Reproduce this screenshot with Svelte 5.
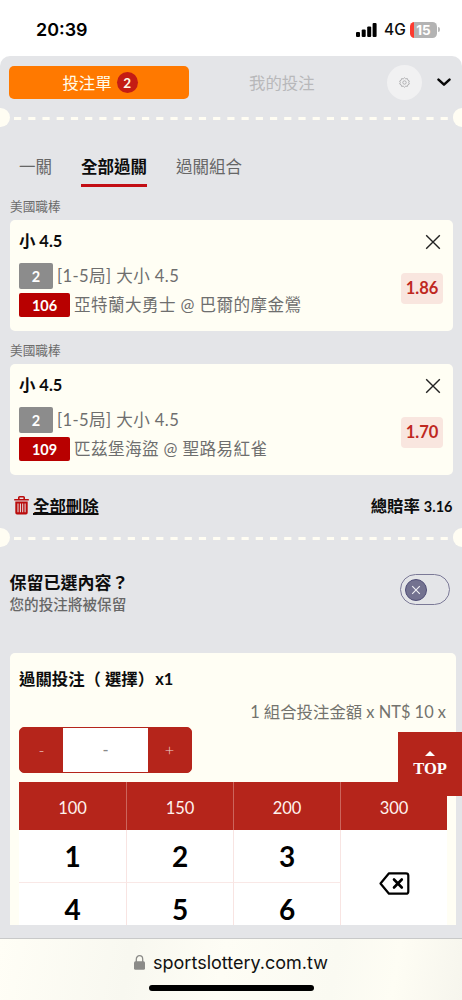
<script>
  const picks = [
    { id: 1, league: '美國職棒', pick: '小 4.5', n: '2', market: '[1-5局] 大小 4.5', code: '106', match: '亞特蘭大勇士 @ 巴爾的摩金鶯', odds: '1.86' },
    { id: 2, league: '美國職棒', pick: '小 4.5', n: '2', market: '[1-5局] 大小 4.5', code: '109', match: '匹茲堡海盜 @ 聖路易紅雀', odds: '1.70' }
  ];
  const amounts = ['100', '150', '200', '300'];
  const digits = ['1', '2', '3', '4', '5', '6'];
</script>

{#snippet divider()}
  <div class="divider">
    <i class="notch"></i>
    <svg class="dashes" height="3" width="434"><line x1="0" x2="434" y1="1.5" y2="1.5" stroke="#fffdf3" stroke-width="3" stroke-dasharray="7.2 7.02" /></svg>
    <i class="notch"></i>
  </div>
{/snippet}

<div class="screen">
  <header class="status">
    <span class="clock">20:39</span>
    <div class="signals">
      <svg width="21" height="14" viewBox="0 0 21 14">
        <rect x="0" y="9" width="4" height="5" rx="1.1" />
        <rect x="5.7" y="6.4" width="4" height="7.6" rx="1.1" />
        <rect x="11.2" y="3.5" width="4" height="10.5" rx="1.1" />
        <rect x="16.6" y="0" width="4" height="14" rx="1.1" />
      </svg>
      <span class="net">4G</span>
      <div class="battery"><span>15</span></div>
      <i class="nub"></i>
    </div>
  </header>

  <main class="sheet">
    <div class="top">
      <button class="slip">投注單<b>2</b></button>
      <span class="mine">我的投注</span>
      <button class="gear" aria-label="設定">
        <svg width="11" height="11" viewBox="0 0 22 22" fill="none" stroke="#a8a8aa" stroke-width="1.7">
          <path d="M11 1.500l2.500 2.200 3.300-.500.900 3.200 3 1.600-1.300 3 1.300 3-3 1.600-.900 3.200-3.300-.500L11 20.500l-2.500-2.200-3.300.500-.900-3.200-3-1.600 1.300-3-1.300-3 3-1.600.900-3.200 3.300.500z" />
          <circle cx="11" cy="11" r="3.4" />
        </svg>
      </button>
      <svg class="chev" width="14" height="9" viewBox="0 0 14 9"><path d="M1.500 1.600L7 6.700l5.500-5.100" fill="none" stroke="#080808" stroke-width="2.500" stroke-linecap="round" stroke-linejoin="round" /></svg>
    </div>

    {@render divider()}

    <nav class="tabs">
      <span>一關</span>
      <span class="active">全部過關</span>
      <span>過關組合</span>
    </nav>

    {#each picks as p (p.id)}
      <div class="league">{p.league}</div>
      <section class="pick">
        <div class="pick-head">
          <strong>{p.pick}</strong>
          <svg width="16" height="16" viewBox="0 0 16 16"><path d="M1.200 1.200l13.600 13.600M14.800 1.200L1.200 14.800" stroke="#222" stroke-width="1.400" /></svg>
        </div>
        <div class="pick-body">
          <div class="lines">
            <div class="line"><span class="tag gray">{p.n}</span><span>{p.market}</span></div>
            <div class="line"><span class="tag red">{p.code}</span><span>{p.match}</span></div>
          </div>
          <span class="odds">{p.odds}</span>
        </div>
      </section>
    {/each}

    <div class="summary">
      <div class="clear">
        <svg width="15" height="19" viewBox="0 0 15 19">
          <path d="M4.800 3V1.600q0-.8.8-.8h3.800q.8 0 .8.8V3M0.200 3.700h14.600" fill="none" stroke="#ba0c0c" stroke-width="1.600" />
          <path fill="#ba0c0c" fill-rule="evenodd" d="M1.300 5.500h12.400v11.200q0 1.700-1.700 1.700H3q-1.700 0-1.700-1.700zM3.500 7.600v8.600h1V7.600zM5.900 7.600v8.600h1V7.600zM8.200 7.600v8.600h1V7.600zM10.600 7.600v8.600h1V7.600z" />
        </svg>
        <u>全部刪除</u>
      </div>
      <div class="total">總賠率 <span>3.16</span></div>
    </div>

    {@render divider()}

    <div class="keep">
      <div>
        <div class="keep-title">保留已選內容？</div>
        <div class="keep-note">您的投注將被保留</div>
      </div>
      <div class="toggle">
        <i><svg width="10" height="10" viewBox="0 0 10 10"><path d="M1.200 1.200l7.600 7.600M8.800 1.200L1.200 8.800" stroke="#f2f2f6" stroke-width="1.100" /></svg></i>
      </div>
    </div>

    <section class="stake">
      <h3>過關投注（<span class="sel">選擇</span>）<span class="x1">x1</span></h3>
      <p class="formula">1 組合投注金額 x NT$ 10 x</p>
      <div class="stepper"><span class="sign">-</span><span class="value">-</span><span class="sign">+</span></div>
      <div class="pad">
        {#each amounts as a}<div class="amount">{a}</div>{/each}
        {#each digits as d}<div class="digit">{d}</div>{/each}
        <div class="erase">
          <svg width="31" height="23" viewBox="0 0 31 23" fill="none" stroke="#000" stroke-width="2.200" stroke-linejoin="round" stroke-linecap="round">
            <path d="M10 1.300H27q2.300 0 2.300 2.300v15.800q0 2.300-2.300 2.300H10L1.500 11.500z" />
            <path d="M15 7.500l7.800 8M22.800 7.500L15 15.500" stroke-width="2.600" />
          </svg>
        </div>
      </div>
    </section>
  </main>

  <footer class="browser">
    <div class="url">
      <svg width="11" height="15" viewBox="0 0 11 15"><path d="M2.300 7V4.200a3.200 3.500 0 0 1 6.400 0V7" fill="none" stroke="#8b8b88" stroke-width="1.300" /><rect x="0" y="6.200" width="11" height="8.600" rx="1.500" fill="#8b8b88" /></svg>
      <span>sportslottery.com.tw</span>
    </div>
    <i class="home"></i>
  </footer>

  <div class="to-top">
    <svg width="10" height="5" viewBox="0 0 10 5"><path d="M5 0l5 5H0z" fill="#fff" /></svg>
    <span>TOP</span>
  </div>
</div>

<style>
  :global(body) { margin: 0; background: #fff; }
  .screen {
    position: relative; width: 462px; height: 1000px; overflow: hidden;
    display: flex; flex-direction: column; background: #fff; color: #0c0c0c;
    font-family: Lato, "Noto Sans CJK TC", sans-serif; font-size: 16.400px; white-space: nowrap;
  }
  .screen * { box-sizing: border-box; }
  button { border: 0; padding: 0; font: inherit; }
  svg { display: block; flex: none; }

  .status { height: 56px; flex: none; display: flex; justify-content: space-between; padding: 18px 22px 0 36px; font-family: Inter, sans-serif; }
  .clock { font-size: 17.900px; font-weight: 600; line-height: 23px; color: #000; }
  .signals { display: flex; align-items: center; height: 23px; }
  .signals svg { margin-right: 1px; }
  .net { font-size: 15.500px; font-weight: 500; margin: 0 5px 0 6px; width: 21px; }
  .battery { width: 27px; height: 16px; border-radius: 4.500px; background: linear-gradient(90deg, #fc3b30 4.500px, #b3b3b3 4.500px); display: flex; justify-content: center; }
  .battery span { color: #fff; font-size: 13.500px; font-weight: 700; line-height: 16px; }
  .nub { width: 2px; height: 5px; margin-left: 1px; background: #b9b9b9; border-radius: 0 2px 2px 0; }

  .sheet { height: 882px; flex: none; background: #e4e5e8; border-radius: 10px 10px 0 0; overflow: hidden; }
  .top { display: flex; align-items: center; height: 52px; padding: 0 11px 0 9px; }
  .slip { width: 180px; height: 33px; border-radius: 5px; background: #ff7900; color: #fffbe9; display: flex; align-items: center; justify-content: center; gap: 5px; padding-left: 2px; }
  .slip b { width: 21px; height: 21px; border-radius: 50%; background: #c41c14; font-size: 13.500px; line-height: 22px; font-weight: 700; }
  .mine { color: #b8b8ba; margin-left: 60px; width: 138px; }
  .gear { width: 35px; height: 35px; border-radius: 50%; background: #f1f1f2; display: grid; place-items: center; }
  .chev { margin-left: 15px; }

  .divider { height: 19px; display: flex; align-items: center; justify-content: space-between; }
  .notch { width: 9.500px; height: 19px; background: #fffdf3; border-radius: 0 10px 10px 0; }
  .notch:last-child { border-radius: 10px 0 0 10px; }
  .dashes { position: relative; top: 1px; }

  .tabs { display: flex; gap: 29px; padding: 20px 19px 0; height: 60px; color: #666; font-size: 16.500px; }
  .tabs span { height: 40px; line-height: 40px; border-bottom: 0; }
  .tabs .active { font-weight: 700; color: #0c0c0c; border-bottom: 3.500px solid #c30d14; }

  .league { font-size: 12.700px; line-height: 20px; height: 33px; padding: 9px 10px 0; color: #6c6c6c; }
  .pick { margin: 0 9.500px; height: 111px; border-radius: 5px; background: #fffef4; padding: 10px 9.500px; }
  .pick-head { display: flex; justify-content: space-between; height: 24px; padding-right: 2px; align-items: center; }
  .pick-head strong { font-weight: 700; line-height: 22px; padding-bottom: 2px; }
  .pick-body { display: flex; justify-content: space-between; align-items: center; padding-top: 8px; }
  .lines { display: flex; flex-direction: column; gap: 3px; color: #6e6e6e; letter-spacing: .400px; }
  .line { display: flex; align-items: center; gap: 4px; height: 26px; font-size: 16.600px; }
  .line > span:last-child { line-height: 24px; padding-top: 2px; }
  .tag { color: #fff; font-size: 14.500px; font-weight: 700; letter-spacing: 0; text-align: center; border-radius: 2px; }
  .gray { width: 34px; height: 26px; line-height: 27px; background: #8c8c8c; margin-top: 1px; }
  .red { width: 51px; height: 24px; line-height: 25px; background: #b80000; margin-top: 1px; }
  .odds { width: 42px; height: 31px; border-radius: 4px; background: #f9e6df; color: #bf281f; font-weight: 700; font-size: 16.500px; line-height: 30px; text-align: center; margin-top: -3px; }

  .summary { display: flex; justify-content: space-between; align-items: center; height: 53px; padding: 8px 9.500px 0 14px; font-weight: 700; }
  .clear { display: flex; align-items: center; gap: 4px; }
  .clear u { padding-bottom: 1px; }
  u { text-underline-offset: 1px; text-decoration-thickness: 1.500px; }
  .total { padding-bottom: 1px; }
  .total span { font-size: 14.500px; }

  .keep { display: flex; justify-content: space-between; height: 106px; padding: 24px 12px 0 9.500px; }
  .keep-title { font-size: 17px; font-weight: 700; line-height: 24px; }
  .keep-note { font-size: 14.600px; line-height: 20px; color: #676767; font-weight: 500; }
  .toggle { width: 50px; height: 31px; margin-top: 3px; border: 1.500px solid #7b7997; border-radius: 16px; padding: 3.500px; }
  .toggle i { display: grid; place-items: center; width: 22px; height: 22px; border-radius: 50%; background: #737290; border: 1.500px solid #504e77; }

  .stake { margin: 0 6.500px 0 9.500px; height: 272px; background: #fffef4; border-radius: 5px 5px 0 0; padding: 14px 9.500px 0; overflow: hidden; }
  h3 { margin: 0; font-size: 16.400px; line-height: 24px; font-weight: 700; }
  .sel { margin-left: 4px; }
  .x1 { margin-left: 1px; }
  .formula { margin: 9px 0 0; line-height: 24px; color: #73736e; text-align: right; }
  .stepper { display: flex; width: 173px; height: 46px; margin-top: 3px; border: 1.500px solid #b5251b; border-radius: 5px; background: #b5251b; }
  .sign { width: 43px; text-align: center; line-height: 44px; color: #eed0cc; font-weight: 300; }
  .value { width: 85px; background: #fff; text-align: center; line-height: 44px; color: #888; }
  .pad { display: grid; grid-template-columns: 108px 107px 107px 106px; grid-template-rows: 48px 53px 53px; margin-top: 9px; width: 428px; background: #fff; overflow: hidden; }
  .amount { background: #b5251b; color: #fff2ee; border-right: 1px solid #cc655c; text-align: center; line-height: 53px; font-size: 16.500px; }
  .amount:nth-child(4) { border-right: 0; }
  .digit { border-right: 1px solid #f8e4e2; border-bottom: 1.500px solid #f9e8e6; text-align: center; line-height: 53px; font-size: 28px; font-weight: 700; color: #000; }
  .erase { grid-column: 4; grid-row: 2 / 4; display: grid; place-items: center; }

  .browser { height: 62px; flex: none; border-top: 1px solid #c8c9c9; background: linear-gradient(100deg, #fffef6, #f8f8f0 28%, #fefdf5 48%, #fafaf2 72%, #fefdf4 85%, #f6f5ed); display: flex; flex-direction: column; align-items: center; }
  .url { height: 46px; display: flex; align-items: center; gap: 8px; font: 18px Inter, sans-serif; color: #111; }
  .home { width: 165px; height: 6px; border-radius: 3px; background: #000; }

  .to-top { position: absolute; left: 398px; top: 732px; width: 64px; height: 64px; background: #b5251b; display: flex; flex-direction: column; align-items: center; padding-top: 19px; color: #fff; font: 700 16.500px/26px "Liberation Serif", serif; }
</style>
